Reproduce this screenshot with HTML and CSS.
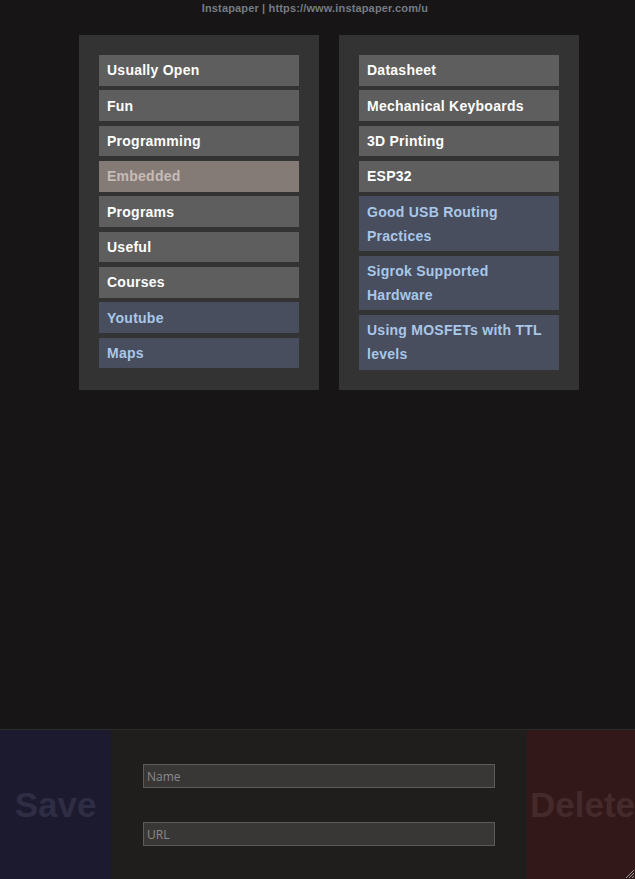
FILE: index.html
```html
<!DOCTYPE html>
<html lang="en">
<head>
    <meta charset="UTF-8">
    <meta name="viewport" content="width=device-width, initial-scale=1.0">
    <title>Bookmarks</title>
    <link rel="stylesheet" href="styles.css">
</head>
<body>
    <div class="page">
        <div class="topline">Instapaper | https://www.instapaper.com/u</div>
        <div class="panels">
            <div class="panel">
                <a class="item">Usually Open</a>
                <a class="item">Fun</a>
                <a class="item">Programming</a>
                <a class="item active">Embedded</a>
                <a class="item">Programs</a>
                <a class="item">Useful</a>
                <a class="item">Courses</a>
                <a class="item link">Youtube</a>
                <a class="item link">Maps</a>
            </div>
            <div class="panel">
                <a class="item">Datasheet</a>
                <a class="item">Mechanical Keyboards</a>
                <a class="item">3D Printing</a>
                <a class="item">ESP32</a>
                <a class="item link">Good USB Routing Practices</a>
                <a class="item link">Sigrok Supported Hardware</a>
                <a class="item link">Using MOSFETs with TTL levels</a>
            </div>
        </div>
    </div>

    <div class="editor">
        <button class="btn save">Save</button>
        <div class="fields">
            <input type="text" placeholder="Name">
            <input type="text" placeholder="URL">
        </div>
        <button class="btn delete">Delete</button>
        <svg class="grip" width="12" height="12" viewBox="0 0 12 12">
            <path d="M11 3 L3 11 M11 6 L6 11 M11 9 L9 11" stroke="#9a9a9a" stroke-width="1"/>
        </svg>
    </div>
</body>
</html>
```

FILE: styles.css
```css
html, body {
    margin: 0;
    padding: 0;
    height: 100%;
    overflow: hidden;
}
body {
    background-color: #171516;
    font-family: "Liberation Sans", Arial, sans-serif;
    display: flex;
    flex-direction: column;
}
.page {
    flex: 1;
}
.topline {
    text-align: center;
    font-size: 11px;
    font-weight: bold;
    letter-spacing: 0.15px;
    color: #757c85;
    line-height: 16px;
    padding-right: 5px;
}
.panels {
    display: flex;
    gap: 20px;
    padding-left: 79px;
    margin-top: 19px;
}
.panel {
    width: 200px;
    padding: 20px;
    background-color: #333333;
    display: flex;
    flex-direction: column;
    gap: 4.67px;
}
.item {
    display: block;
    background-color: #5e5e5e;
    color: #ffffff;
    font-size: 14px;
    font-weight: bold;
    letter-spacing: 0.25px;
    line-height: 24px;
    padding: 3.33px 8px;
}
.item.active {
    background-color: #857b76;
    color: #c6bcb7;
}
.item.link {
    background-color: #484e5e;
    color: #a9c7e8;
}
.editor {
    position: relative;
    display: flex;
    width: 638px;
    height: 149px;
    border-top: 1px solid #2a2a2a;
    background-color: #1f1e1d;
}
.btn {
    width: 111px;
    border: none;
    padding: 0;
    font-family: "Liberation Sans", Arial, sans-serif;
    font-size: 35px;
    font-weight: bold;
    text-align: center;
}
.save {
    background-color: #1b1a2f;
    color: #2e2d44;
}
.delete {
    background-color: #331819;
    color: #452a2b;
}
.fields {
    width: 352px;
    padding: 34px 32px 33px;
    display: flex;
    flex-direction: column;
    gap: 34px;
}
.fields input {
    height: 24px;
    box-sizing: border-box;
    margin: 0;
    border: 1px solid #5c5b59;
    background-color: #383735;
    color: #cccccc;
    font-family: "Open Sans", sans-serif;
    font-size: 12px;
    padding: 0 3px;
    outline: none;
}
.fields input::placeholder {
    color: #8a8a8a;
}
.grip {
    position: absolute;
    left: 623px;
    bottom: 0;
}
```
